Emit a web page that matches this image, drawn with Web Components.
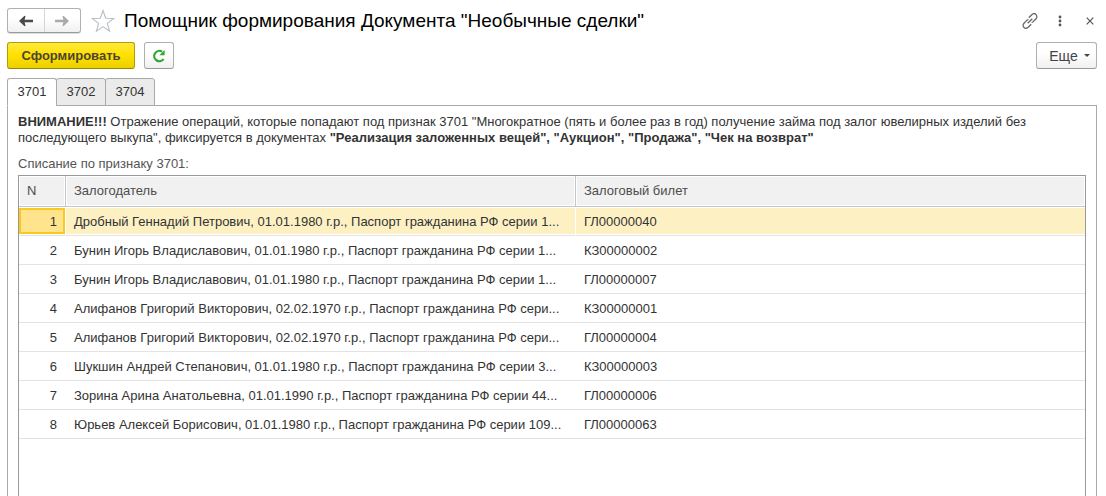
<!DOCTYPE html>
<html lang="ru">
<head>
<meta charset="utf-8">
<title>Помощник формирования Документа "Необычные сделки"</title>
<style>
html, body { margin: 0; height: 100%; }
body { background: #fff; color: #333; font: 13px/16px "Liberation Sans", Arial, sans-serif; overflow: hidden; }
</style>
</head>
<body>
<deal-assistant></deal-assistant>
<script>
const define = (name, html, setup) => {
  const template = document.createElement('template');
  template.innerHTML = `<style>*{box-sizing:border-box} button{font:inherit;color:inherit;margin:0;cursor:pointer}</style>` + html;
  customElements.define(name, class extends HTMLElement {
    constructor() {
      super();
      this.attachShadow({ mode: 'open' }).append(template.content.cloneNode(true));
    }
    connectedCallback() { if (setup) setup(this, this.shadowRoot); }
  });
};

define('nav-history', `
<style>
:host { display: flex; height: 25px; width: 74px; border: 1px solid #b0b0b0; border-bottom-color: #999; border-radius: 3px; background: linear-gradient(#fff 40%, #f0f0f0); box-shadow: 0 1px 0 #ddd; }
button { flex: 1; display: grid; place-items: center; border: 0; padding: 0; background: none; }
button + button { border-left: 1px solid #d5d5d5; }
</style>
<button aria-label="Назад"><svg width="14" height="12" viewBox="0 0 14 12"><path d="M0 6L5.500.8 6.500 1.200 5.600 4.700H14v2.600H5.600l.9 3.500-1 .4z" fill="#4a4a4a"/></svg></button>
<button aria-label="Вперед"><svg width="14" height="12" viewBox="0 0 14 12"><path d="M14 6L8.500.8l-1 .4.900 3.500H0v2.600h8.400l-.9 3.500 1 .4z" fill="#aaa"/></svg></button>`);

define('icon-button', `
<style>
:host { display: block; }
button { display: grid; place-items: center; width: 24px; height: 24px; padding: 0; border: 0; background: none; }
</style>
<button><slot></slot></button>`, (host, root) => {
  root.querySelector('button').setAttribute('aria-label', host.getAttribute('label'));
});

define('window-header', `
<style>
:host { display: flex; align-items: center; height: 25px; }
h1 { flex: 1; margin: 0 0 0 9px; color: #000; font-size: 19px; line-height: 24px; font-weight: 400; white-space: nowrap; }
.star { margin-left: 10px; }
.tools { display: flex; gap: 6px; margin-right: -5px; }
svg { display: block; }
</style>
<nav-history></nav-history>
<icon-button class="star" label="Избранное"><svg width="24" height="24" viewBox="0 0 24 24"><path d="M12 1.500l2.700 7.700 8.100.2-6.500 5 2.300 7.800L12 17.600l-6.600 4.600 2.300-7.800-6.500-5 8.100-.2z" fill="none" stroke="#b8bec4" stroke-width="1.100"/></svg></icon-button>
<h1><slot></slot></h1>
<div class="tools">
<icon-button label="Ссылка"><svg width="16" height="16" viewBox="0 0 16 16" fill="none" stroke="#666" stroke-width="1.300"><path d="M5.700 10.300l4.600-4.600M6.800 4.700l3-3c1.200-1.200 3-1.200 4.200-.1 1.200 1.200 1.200 3 0 4.200l-2.800 2.800c-.5.5-1 .7-1.600.7M9.200 11.300l-3 3c-1.200 1.200-3 1.200-4.200.1-1.200-1.200-1.200-3 0-4.200l2.800-2.800c.5-.5 1-.7 1.600-.7"/></svg></icon-button>
<icon-button label="Меню"><svg width="4" height="12" viewBox="0 0 4 12" fill="#555"><circle cx="2" cy="2" r="1.400"/><circle cx="2" cy="6" r="1.400"/><circle cx="2" cy="10" r="1.400"/></svg></icon-button>
<icon-button label="Закрыть"><svg width="8" height="8" viewBox="0 0 8 8"><path d="M.7.7l6.600 6.600M7.300.7L.7 7.300" stroke="#555" stroke-width="1.200"/></svg></icon-button>
</div>`);

define('command-button', `
<style>
:host { display: block; }
button { display: flex; align-items: center; justify-content: center; height: 27px; width: 100%; padding: 0 12px; border: 1px solid #b0b0b0; border-bottom-color: #999; border-radius: 3px; color: #444; background: linear-gradient(#fff 40%, #f0f0f0); white-space: nowrap; }
:host([primary]) button { border-color: #b39e00; border-bottom-color: #978600; background: linear-gradient(#ffe93e, #ffe000 50%, #ecd000); color: #4b4630; font-weight: 700; }
:host([large]) button { font-size: 14px; padding-right: 6px; }
:host([square]) button { padding: 0; }
</style>
<button><slot></slot></button>`, (host, root) => {
  if (host.hasAttribute('label')) root.querySelector('button').setAttribute('aria-label', host.getAttribute('label'));
});

define('command-bar', `
<style>
:host { display: flex; gap: 9px; margin-top: 9px; }
.run { width: 128px; }
.refresh { width: 30px; }
.more { width: 61px; margin-left: auto; }
.more svg { margin-left: 6px; }
</style>
<command-button class="run" primary>Сформировать</command-button>
<command-button class="refresh" square label="Обновить"><svg width="14" height="14" viewBox="0 0 14 14"><path d="M11.600 10.200A5.200 5.200 0 1 1 10.200 2.600" fill="none" stroke="#32a532" stroke-width="2.200"/><path d="M12.600 1v5.200H7.400z" fill="#32a532"/></svg></command-button>
<command-button class="more" large>Еще<svg width="6" height="4" viewBox="0 0 6 4"><path d="M0 0h6L3 3z" fill="#444"/></svg></command-button>`);

define('tab-strip', `
<style>
:host { display: block; margin: 9px 0 -1px; position: relative; }
div { display: flex; }
button { width: 50px; height: 28px; padding: 0 0 1px; border: 1px solid #aaa; background: #ebebeb; border-radius: 3px 3px 0 0; }
button + button { margin-left: -1px; }
button[aria-selected=true] { background: #fff; border-bottom-color: #fff; }
</style>
<div role="tablist"></div>`, (host, root) => {
  const list = root.querySelector('[role=tablist]');
  list.innerHTML = host.getAttribute('tabs').split(' ').map((t, i) => `<button role="tab" aria-selected="${i === 0}">${t}</button>`).join('');
});

define('pledge-table', `
<style>
:host { display: block; flex: 1; border: 1px solid #999; border-bottom: 0; }
table { width: 100%; border-collapse: separate; border-spacing: 0; table-layout: fixed; }
.n { width: 47px; } .who { width: 510px; }
th, td { padding: 0 8px; height: 29px; text-align: left; font-weight: 400; white-space: nowrap; overflow: hidden; background-clip: padding-box; }
th { height: 31px; color: #4d4d4d; background: #f1f1f1; border-bottom: 1px solid #c6c6c6; border-right: 1px solid #c6c6c6; box-shadow: inset 0 0 0 1px #fff; }
th:last-child { border-right: 0; }
td { padding-top: 2px; border-bottom: 1px solid #e3e3e3; }
td:first-child { padding-right: 9px; text-align: right; }
tr.selected td { background: #fdf1c4; box-shadow: inset 0 1px #fff, inset 0 -1px #fff; border-right: 1px solid #fff; }
tr.selected td:last-child { border-right: 0; }
tr.selected td:first-child { background: #ffe48d; padding-right: 8px; box-shadow: inset 0 1px #fff, inset 0 -1px #fff, inset 0 0 0 2px #f9c922, inset 0 3px #f9c922, inset 0 -3px #f9c922; }
</style>
<table>
<colgroup><col class="n"><col class="who"><col></colgroup>
<thead><tr><th scope="col">N</th><th scope="col">Залогодатель</th><th scope="col">Залоговый билет</th></tr></thead>
<tbody></tbody>
</table>`, (host, root) => {
  const rows = [
    ['Дробный Геннадий Петрович, 01.01.1980 г.р., Паспорт гражданина РФ серии 1...', 'ГЛ00000040'],
    ['Бунин Игорь Владиславович, 01.01.1980 г.р., Паспорт гражданина РФ серии 1...', 'КЗ00000002'],
    ['Бунин Игорь Владиславович, 01.01.1980 г.р., Паспорт гражданина РФ серии 1...', 'ГЛ00000007'],
    ['Алифанов Григорий Викторович, 02.02.1970 г.р., Паспорт гражданина РФ сери...', 'КЗ00000001'],
    ['Алифанов Григорий Викторович, 02.02.1970 г.р., Паспорт гражданина РФ сери...', 'ГЛ00000004'],
    ['Шукшин Андрей Степанович, 01.01.1980 г.р., Паспорт гражданина РФ серии 3...', 'КЗ00000003'],
    ['Зорина Арина Анатольевна, 01.01.1990 г.р., Паспорт гражданина РФ серии 44...', 'ГЛ00000006'],
    ['Юрьев Алексей Борисович, 01.01.1980 г.р., Паспорт гражданина РФ серии 109...', 'ГЛ00000063']
  ];
  root.querySelector('tbody').innerHTML = rows.map(([who, ticket], i) =>
    `<tr${i ? '' : ' class="selected"'}><td>${i + 1}</td><td>${who}</td><td>${ticket}</td></tr>`).join('');
});

define('tab-panel', `
<style>
:host { display: flex; flex-direction: column; flex: 1; padding: 8px 10px 0; border: 1px solid #aaa; border-bottom: 0; }
p { margin: 0 0 10px; }
.caption { margin: 0 0 3px; color: #555; }
</style>
<p><b>ВНИМАНИЕ!!!</b> Отражение операций, которые попадают под признак 3701 "Многократное (пять и более раз в год) получение займа под залог ювелирных изделий без<br>последующего выкупа", фиксируется в документах <b>"Реализация заложенных вещей", "Аукцион", "Продажа", "Чек на возврат"</b></p>
<div class="caption">Списание по признаку 3701:</div>
<pledge-table></pledge-table>`);

define('deal-assistant', `
<style>
:host { display: flex; flex-direction: column; box-sizing: border-box; min-height: 100vh; padding: 8px 9px 0 7px; }
</style>
<window-header>Помощник формирования Документа "Необычные сделки"</window-header>
<command-bar></command-bar>
<tab-strip tabs="3701 3702 3704"></tab-strip>
<tab-panel role="tabpanel"></tab-panel>`);
</script>
</body>
</html>
